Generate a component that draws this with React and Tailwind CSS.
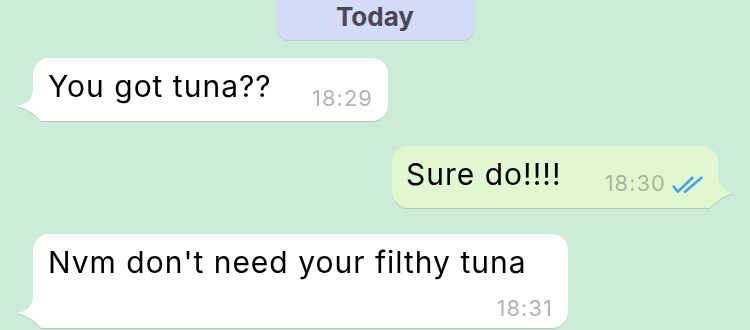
import React from 'react';

const font = { fontFamily: 'Inter, "Liberation Sans", sans-serif' };

function TailLeft() {
  return (
    <svg className="absolute left-[-18px] bottom-0" width="40" height="35" viewBox="0 0 40 35">
      <path d="M18 2 C18 13 12 19 1 20 C10 22 18 26 26 35 L40 35 L40 0 L18 0 Z" fill="#ffffff" />
    </svg>
  );
}

function TailRight() {
  return (
    <svg className="absolute right-[-18px] bottom-0" width="40" height="35" viewBox="0 0 40 35">
      <path d="M22 2 C22 13 28 19 39 20 C30 22 22 26 14 35 L0 35 L0 0 L22 0 Z" fill="#e1f7cf" />
    </svg>
  );
}

function Ticks() {
  return (
    <svg width="32" height="18" viewBox="0 0 32 18" fill="none" stroke="#45a3e8" strokeWidth="2.6" strokeLinecap="round" strokeLinejoin="round">
      <path d="M1.8 10.5 L5.8 15.8 L20.5 1.8" />
      <path d="M13 15.8 L29.5 1.8" />
    </svg>
  );
}

export default function App() {
  return (
    <div className="w-[750px] h-[330px] overflow-hidden bg-[#cdebd9] flex flex-col" style={font}>
      <div className="flex justify-center">
        <div className="-mt-3 w-[197px] h-[52px] rounded-[12px] bg-[#d4dcfa] shadow-[0_1px_1px_rgba(0,0,0,0.12)] flex items-end justify-center pb-[8px]">
          <span className="text-[26px] leading-[30px] font-bold text-[#484858]">Today</span>
        </div>
      </div>

      <div className="mt-[18px] ml-[33px] self-start relative drop-shadow-[0_1px_0.6px_rgba(0,0,0,0.14)]">
        <TailLeft />
        <div className="relative w-[355px] h-[63px] rounded-[16px] bg-white flex justify-between px-[15px]">
          <span className="pt-[10px] text-[30px] leading-[36px] tracking-[1px] text-black">You got tuna??</span>
          <span className="self-end pb-[11px] text-[22px] leading-[24px] tracking-[1px] text-[#b3b3b3]">18:29</span>
        </div>
      </div>

      <div className="mt-[25px] mr-[32px] self-end relative drop-shadow-[0_1px_0.6px_rgba(0,0,0,0.14)]">
        <TailRight />
        <div className="relative w-[326px] h-[62px] rounded-[16px] bg-[#e1f7cf] flex px-[14px]">
          <span className="pt-[10px] text-[30px] leading-[36px] tracking-[1px] text-black">Sure do!!!!</span>
          <div className="ml-auto self-end pb-[13px] flex items-end gap-[6px]">
            <span className="text-[22px] leading-[24px] tracking-[1px] text-[#a6b59e]">18:30</span>
            <div className="mb-[1px]"><Ticks /></div>
          </div>
        </div>
      </div>

      <div className="mt-[26px] ml-[33px] self-start relative drop-shadow-[0_1px_0.6px_rgba(0,0,0,0.14)]">
        <TailLeft />
        <div className="relative w-[535px] h-[94px] rounded-[16px] bg-white flex flex-col px-[15px]">
          <span className="pt-[10px] text-[30px] leading-[36px] tracking-[1px] text-black">Nvm don't need your filthy tuna</span>
          <span className="self-end mt-auto pb-[8px] text-[22px] leading-[24px] tracking-[1px] text-[#b3b3b3]">18:31</span>
        </div>
      </div>
    </div>
  );
}
